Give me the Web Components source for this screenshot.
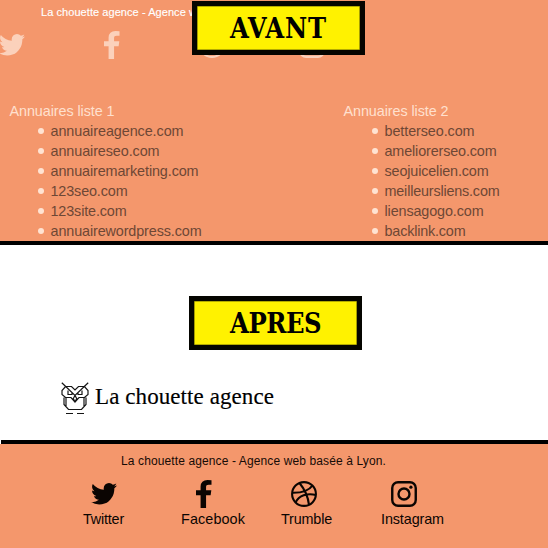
<!DOCTYPE html>
<html lang="fr"><head><meta charset="utf-8"><title>La chouette agence</title>
<style>
html,body{margin:0;background:#fff}
body{font-family:"Liberation Sans",Arial,sans-serif;width:548px;height:548px;overflow:hidden}
</style></head><body>
<comparison-page></comparison-page>
<script>
const define=(name,html,setup)=>customElements.define(name,class extends HTMLElement{
  connectedCallback(){
    if(this.shadowRoot)return;
    this.attachShadow({mode:'open'}).innerHTML=typeof html==='function'?html(this):html;
    if(setup)setup(this);
  }
});

/* Text tracked out to a given line width. */
define('fit-text',el=>`<style>:host{display:block;white-space:nowrap;width:${el.getAttribute('w')}px}span{display:inline-block;white-space:nowrap}</style><span>${el.getAttribute('text')}</span>`,el=>{
  const s=el.shadowRoot.querySelector('span');
  const n=el.getAttribute('text').length;
  s.style.letterSpacing=(Number(el.getAttribute('w'))-s.getBoundingClientRect().width)/n+'px';
});

const icons={
  twitter:['108 256 1576 1280',26,21.5,'<path fill="currentColor" d="M1684 408q-67 98-162 167 1 14 1 42 0 130-38 259.5t-115.5 248.5-184.5 210.5-258 146-323 54.5q-271 0-496-145 35 4 78 4 225 0 401-138-105-2-188-64.5t-114-159.5q33 5 61 5 43 0 85-11-112-23-185.5-111.5t-73.5-205.5v-4q68 38 146 41-66-44-105-115t-39-154q0-88 44-163 121 149 294.5 238.5t371.5 99.5q-8-38-8-74 0-134 94.5-228.5t228.5-94.5q140 0 236 102 109-21 205-78-37 115-142 178 93-10 186-50z"/>'],
  facebook:['479 0 864 1664',15.5,28,'<path fill="currentColor" d="M1343 12v264h-157q-86 0-116 36t-30 108v189h293l-39 296h-254v759h-306v-759h-255v-296h255v-218q0-186 104-288.5t277-102.5q147 0 228 12z"/>'],
  dribbble:['0 0 26 26',26,26,'<g fill="none" stroke="currentColor" stroke-width="2.100"><circle cx="13" cy="13" r="11.900"/><path d="M8.500 2C13 7.500 17 15 18 23.800M1.200 11.800C10 12 18 9.500 21.500 4.500M4.500 21.500C8 14.500 16 11.800 25 14"/></g>'],
  instagram:['0 0 26 26',26,26,'<g fill="none" stroke="currentColor"><rect x="1.250" y="1.250" width="23.500" height="23.500" rx="5.800" stroke-width="2.400"/><circle cx="13" cy="13" r="5.500" stroke-width="2.400"/></g><circle cx="19.900" cy="6.200" r="1.600" fill="currentColor"/>']
};
define('social-icon',el=>{const [box,w,h,art]=icons[el.getAttribute('name')];
 return `<style>:host{display:block;width:${w}px;height:${h}px}svg{display:block}</style><svg width="${w}" height="${h}" viewBox="${box}" preserveAspectRatio="none">${art}</svg>`});

define('state-badge',el=>`<style>:host{display:block;box-sizing:border-box;width:173px;height:54px;border:5.500px solid #050500;background:#fff200;box-shadow:inset 0 0 0 .6px #6b6500;color:#000;font:bold 27px/45px "DejaVu Serif Condensed","DejaVu Serif",serif;font-stretch:condensed;padding-left:36px}</style><fit-text text="${el.getAttribute('label')}" w="${el.getAttribute('w')}"></fit-text>`);

define('link-list',el=>`<style>
:host{display:block;width:200px;font-size:14.400px;line-height:20px;color:#ffe0cf}
ul{list-style:none;margin:0;padding:0 0 0 28.500px}
li{display:flex;align-items:center;height:20px;gap:6.500px;color:#6e4735}
i{width:6px;height:6px;border-radius:50%;background:#ffe3d2}
</style><fit-text w="${el.getAttribute('w')}" text="${el.getAttribute('heading')}"></fit-text><ul>${el.getAttribute('items').split(' ').map(x=>{const [t,w]=x.split(':');return `<li><i></i><fit-text text="${t}" w="${w}"></fit-text></li>`}).join('')}</ul>`);

define('brand-logo',`<style>:host{display:flex;align-items:flex-start;color:#000}svg{display:block}fit-text{font:23px/28px "Liberation Serif",serif;margin:1px 0 0 6px;-webkit-text-stroke:.15px #000}</style>
<svg width="28" height="33" viewBox="0 0 28 33" fill="none" stroke="#151515" stroke-width="1.200"><path d="M.8.800 14 13.500 27.200.800M4.500 4.500H10.500L14 8 17.500 4.500H23.500L27 8.500V12.500L23.500 15.500H18L14 20 10 15.500H4.500L1 12.500V8.500ZM3 15.500V22.500L7.500 27.500H20.500L25 22.500V15.500M5 16V24M23 16V24M7 8.500V12.500H11V10.500M17 10.500V12.500H21V8.500M14 13.500 12.300 16.500 14 20 15.700 16.500ZM5 31.500H12M16 31.500H23"/></svg><fit-text w="179" text="La chouette agence"></fit-text>`);

define('social-link',el=>`<style>:host{display:grid;grid-template-rows:30px 18px;width:${el.getAttribute('w')}px;font-size:14.400px;line-height:20px}div{display:flex;align-items:center;padding-left:${el.getAttribute('inset')}px}</style><div><social-icon name="${el.getAttribute('icon')}"></social-icon></div><fit-text w="${el.getAttribute('w')}" text="${el.getAttribute('label')}"></fit-text>`);

define('before-panel',`<style>
:host{display:block;position:relative;height:241px;background:#f4976c;overflow:hidden}
header{margin-left:41px;padding-top:5px;height:24px;box-sizing:border-box;color:#fff;font-size:11px;line-height:15px;-webkit-text-stroke:.15px #fff}
nav{display:grid;grid-template-columns:105px 95px 100px 100px;align-items:center;height:42px;color:#fbd1bb;margin-left:-1px}
main{display:grid;grid-template-columns:334px 200px;padding:35px 0 0 9.500px}
state-badge{position:absolute;left:192px;top:1px;padding-left:33px}
</style><header><fit-text w="156" text="La chouette agence - Agence w"></fit-text></header>
<nav><social-icon name="twitter"></social-icon><social-icon name="facebook"></social-icon><social-icon name="dribbble"></social-icon><social-icon name="instagram"></social-icon></nav>
<main><link-list w="105" heading="Annuaires liste 1" items="annuaireagence.com:133 annuaireseo.com:109 annuairemarketing.com:148 123seo.com:77 123site.com:76 annuairewordpress.com:151"></link-list>
<link-list w="105" heading="Annuaires liste 2" items="betterseo.com:90 ameliorerseo.com:112 seojuicelien.com:104 meilleursliens.com:115 liensagogo.com:99 backlink.com:81"></link-list></main>
<state-badge label="AVANT" w="97"></state-badge>`);

define('after-panel',`<style>
:host{display:block}
.brand{height:195px;box-sizing:border-box;background:#fff;padding:51px 0 0 189px}
brand-logo{margin:32px 0 0 -128px}
hr{border:0;margin:0 0 0 1px;height:4px;background:#000}
footer{height:104px;box-sizing:border-box;background:#f4976c;color:#160b06;padding:9px 0 0}
.line{font-size:12px;line-height:16px;margin-left:121px}
nav{display:flex;margin:10px 0 0 83px}
social-link{color:#0b0502}
social-link:nth-child(2){margin-left:57px}social-link:nth-child(3){margin-left:36px}social-link:nth-child(4){margin-left:49px}
</style><div class="brand"><state-badge label="APRES" w="91"></state-badge><brand-logo></brand-logo></div><hr>
<footer><fit-text class="line" w="265" text="La chouette agence - Agence web basée à Lyon."></fit-text>
<nav><social-link icon="twitter" w="41" inset="8" label="Twitter"></social-link><social-link icon="facebook" w="64" inset="15" label="Facebook"></social-link><social-link icon="dribbble" w="51" inset="10" label="Trumble"></social-link><social-link icon="instagram" w="63" inset="10" label="Instagram"></social-link></nav></footer>`);

define('comparison-page',`<style>:host{display:block;width:548px}hr{border:0;margin:0;height:4px;background:#000}</style><before-panel></before-panel><hr><after-panel></after-panel>`);
</script></body></html>
